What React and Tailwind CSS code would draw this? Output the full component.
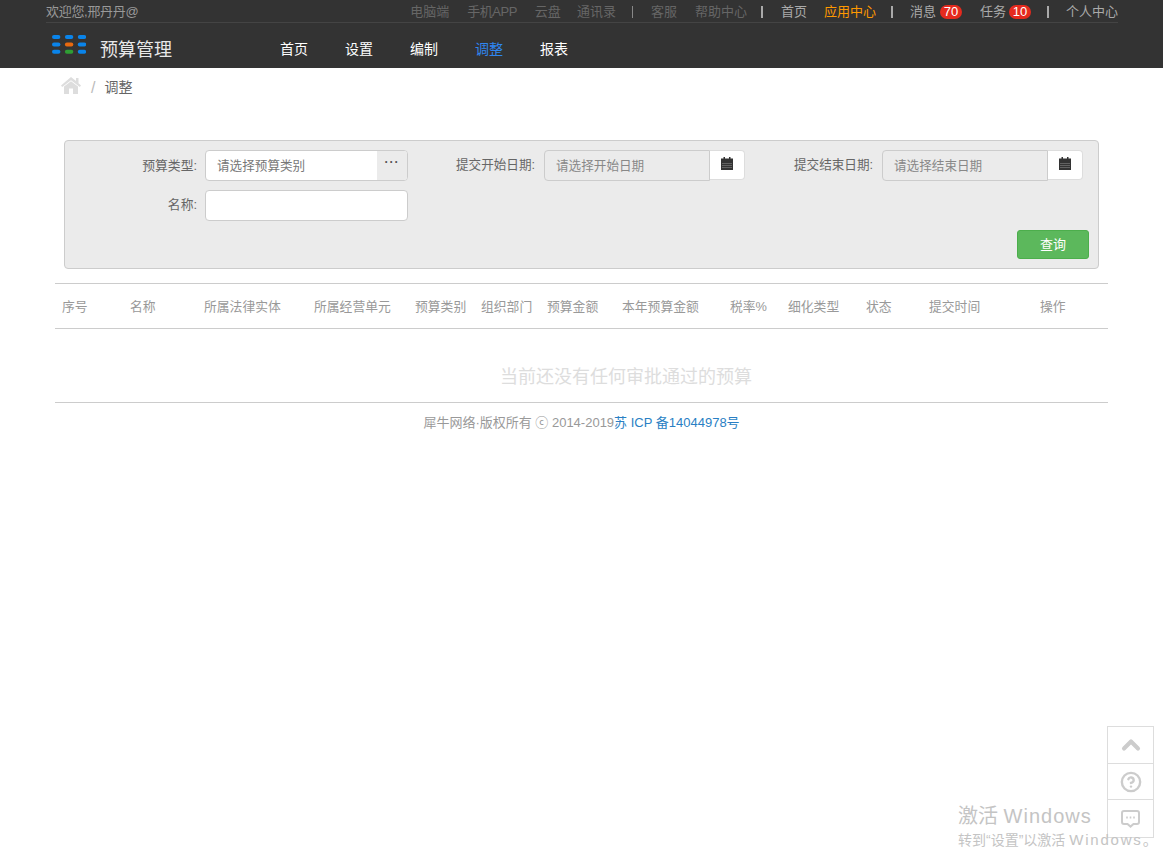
import { ChevronUp, CircleHelp } from 'lucide-react';

const columns = [
  { label: '序号', width: 'w-[68px]' },
  { label: '名称', width: 'w-[74px]' },
  { label: '所属法律实体', width: 'w-[110px]' },
  { label: '所属经营单元', width: 'w-[101px]' },
  { label: '预算类别', width: 'w-[66px]' },
  { label: '组织部门', width: 'w-[66px]' },
  { label: '预算金额', width: 'w-[75px]' },
  { label: '本年预算金额', width: 'w-[108px]' },
  { label: '税率%', width: 'w-[58px]' },
  { label: '细化类型', width: 'w-[78px]' },
  { label: '状态', width: 'w-[63px]' },
  { label: '提交时间', width: 'w-[111px]' },
  { label: '操作', width: 'w-[75px]' },
];

const navItems = ['首页', '设置', '编制', '调整', '报表'];

function Logo() {
  const colors = ['#0a84ea', '#0a84ea', '#0a84ea', '#0a84ea', '#e8690f', '#0a84ea', '#0a84ea', '#2f9e34', '#0a84ea'];
  return (
    <svg width="34" height="19" viewBox="0 0 34 19">
      {colors.map((color, index) => (
        <rect key={index} x={(index % 3) * 12.9} y={Math.floor(index / 3) * 7.4} width="8.4" height="4" rx="2" fill={color} />
      ))}
    </svg>
  );
}

function HomeIcon() {
  return (
    <svg width="20" height="17" viewBox="0 0 20 17" fill="#dddddd">
      <path d="M10 0 L15 4 V1 H17.5 V6.2 L20 8.4 L18.8 10 L10 3.2 L1.2 10 L0 8.4 Z" />
      <path d="M10 4.2 L17 9.6 V17 H12 V11.5 H8 V17 H3 V9.6 Z" />
    </svg>
  );
}

function CalendarIcon() {
  return (
    <svg width="12" height="13" viewBox="0 0 12 13">
      <rect x="2.5" y="0" width="1.5" height="2.5" fill="#333333" />
      <rect x="8" y="0" width="1.5" height="2.5" fill="#333333" />
      <rect x="0" y="1.5" width="12" height="11.5" fill="#333333" />
      <path d="M1 6.5h10M1 8.5h10M1 10.5h10" stroke="#777777" strokeWidth="0.7" />
    </svg>
  );
}

function ChatIcon() {
  return (
    <svg width="19" height="18" viewBox="0 0 19 18" fill="none" stroke="#cccccc" strokeWidth="2">
      <path d="M3 1 H16 A2 2 0 0 1 18 3 V12 A2 2 0 0 1 16 14 H12.5 L9.5 16.6 L6.5 14 H3 A2 2 0 0 1 1 12 V3 A2 2 0 0 1 3 1 Z" />
      <path d="M5.2 7.5h1.6M8.7 7.5h1.6M12.2 7.5h1.6" strokeWidth="1.8" />
    </svg>
  );
}

function DateField({ labelWidth, label, placeholder }) {
  return (
    <div className="flex items-start">
      <label className={`${labelWidth} text-right text-[12.6px] leading-[31px] text-[#666]`}>{label}</label>
      <div className="ml-[9px] flex w-[201px]">
        <div className="h-[31px] w-[166px] rounded-l-[4px] border border-[#ccc] bg-[#ebebeb] pl-[11px] text-[12.6px] leading-[30px] text-[#888]">{placeholder}</div>
        <div className="flex h-[30px] w-[35px] items-center justify-center rounded-r-[4px] border border-l-0 border-[#ddd] bg-white pb-[3px]">
          <CalendarIcon />
        </div>
      </div>
    </div>
  );
}

export default function App() {
  return (
    <div className="relative h-[847px] overflow-hidden bg-white font-['Liberation_Sans','Noto_Sans_CJK_SC',sans-serif]">
      <header className="h-[68px] bg-[#333] px-[46px]">
        <div className="flex h-[23px] w-[1072px] items-center justify-between border-b border-[#444] pt-[1px] text-[13px]">
          <span className="tracking-[-0.3px] text-[#999]">欢迎您,邢丹丹@</span>
          <div className="flex items-center text-[#666]">
            <span>电脑端</span>
            <span className="ml-[18px] tracking-[-0.5px]">手机APP</span>
            <span className="ml-[18px]">云盘</span>
            <span className="ml-[16px]">通讯录</span>
            <span className="ml-[16px] h-[12px] w-px bg-[#888]" />
            <span className="ml-[18px]">客服</span>
            <span className="ml-[18px]">帮助中心</span>
            <span className="ml-[14px] h-[12px] w-[2px] bg-[#aaa]" />
            <span className="ml-[18px] text-[#aaa]">首页</span>
            <span className="ml-[17px] text-[#ff9900]">应用中心</span>
            <span className="ml-[15px] h-[12px] w-[2px] bg-[#aaa]" />
            <span className="ml-[17px] text-[#aaa]">消息</span>
            <span className="ml-[4px] flex h-[14px] w-[22px] items-center justify-center rounded-full bg-[#e52a1e] text-[13px] text-white">70</span>
            <span className="ml-[18px] text-[#aaa]">任务</span>
            <span className="ml-[3px] flex h-[14px] w-[22px] items-center justify-center rounded-full bg-[#e52a1e] text-[13px] text-white">10</span>
            <span className="ml-[16px] h-[12px] w-[2px] bg-[#aaa]" />
            <span className="ml-[17px] text-[#aaa]">个人中心</span>
          </div>
        </div>
        <div className="flex h-[45px] items-center pt-[8px]">
          <div className="ml-[6px] -mt-[8px] flex self-start pt-[12px]">
            <Logo />
          </div>
          <span className="ml-[14px] mt-[2px] w-[180px] text-[18px] text-[#e8e8e8]">预算管理</span>
          <nav className="flex gap-[37px] text-[14px] text-white">
            {navItems.map((item) => (
              <a key={item} className={item === '调整' ? 'text-[#2f86f0]' : ''}>{item}</a>
            ))}
          </nav>
        </div>
      </header>

      <div className="flex h-[72px] items-start pl-[61px] pt-[9px] text-[14px] leading-[21px]">
        <HomeIcon />
        <span className="ml-[10px] text-[16px] text-[#bbb]">/</span>
        <span className="ml-[9px] text-[#666]">调整</span>
      </div>

      <section className="ml-[64px] w-[1035px] rounded-[4px] border border-[#ccc] bg-[#ebebeb] pt-[9px] pb-[9px] pr-[9px]">
        <div className="flex">
          <div className="flex">
            <label className="w-[132px] text-right text-[12.8px] leading-[31px] text-[#666]">预算类型:</label>
            <div className="ml-[8px] flex h-[31px] w-[203px] overflow-hidden rounded-[4px] border border-[#ccc] bg-white">
              <div className="flex-1 pl-[11px] text-[12.6px] leading-[30px] text-[#777]">请选择预算类别</div>
              <div className="flex w-[30px] justify-center bg-[#ebebeb] text-[12px] font-bold leading-[22px] tracking-[1px] text-[#555]">···</div>
            </div>
          </div>
          <DateField labelWidth="w-[127px]" label="提交开始日期:" placeholder="请选择开始日期" />
          <DateField labelWidth="w-[128px]" label="提交结束日期:" placeholder="请选择结束日期" />
        </div>
        <div className="mt-[9px] flex">
          <label className="w-[132px] text-right text-[12.8px] leading-[30px] text-[#666]">名称:</label>
          <div className="ml-[8px] h-[31px] w-[203px] rounded-[4px] border border-[#ccc] bg-white" />
        </div>
        <div className="mt-[9px] flex justify-end">
          <button className="h-[29px] w-[72px] rounded-[3px] border border-[#4cae4c] bg-[#5cb85c] text-[13px] text-white">查询</button>
        </div>
      </section>

      <table className="mt-[14px] ml-[55px] w-[1053px] table-fixed border-collapse">
        <thead>
          <tr className="h-[45px] border-y border-[#ccc]">
            {columns.map((col) => (
              <th key={col.label} className={`${col.width} pl-[7px] pt-[1px] text-left text-[12.8px] font-normal text-[#999]`}>{col.label}</th>
            ))}
          </tr>
        </thead>
        <tbody>
          <tr className="h-[74px] border-b border-[#ccc]">
            <td colSpan={13} className="pl-[89px] pt-[24px] text-center text-[18px] text-[#ddd]">当前还没有任何审批通过的预算</td>
          </tr>
        </tbody>
      </table>

      <footer className="ml-[55px] mt-[10px] w-[1053px] text-center text-[13px] leading-[19px] text-[#999]">
        犀牛网络·版权所有 ⓒ 2014-2019<span className="text-[#2a7fc4]">苏 ICP 备14044978号</span>
      </footer>

      <div className="absolute right-[9px] top-[726px] flex w-[47px] flex-col border border-[#ddd] bg-white text-[#ccc]">
        <button className="flex h-[37px] items-center justify-center border-b border-[#ddd]">
          <ChevronUp size={28} strokeWidth={3.5} />
        </button>
        <button className="flex h-[36px] items-center justify-center border-b border-[#ddd]">
          <CircleHelp size={22} strokeWidth={2.6} />
        </button>
        <button className="flex h-[37px] items-center justify-center">
          <ChatIcon />
        </button>
      </div>

      <div className="pointer-events-none absolute left-[958px] top-[802px] whitespace-nowrap text-[#c4c4c4]">
        <div className="text-[20px] leading-[28px]">激活 <span className="tracking-[1px]">Windows</span></div>
        <div className="mt-[3px] text-[14px] leading-[14px]">转到“设置”以激活 <span className="text-[15px] tracking-[1.8px]">Windows。</span></div>
      </div>
    </div>
  );
}
